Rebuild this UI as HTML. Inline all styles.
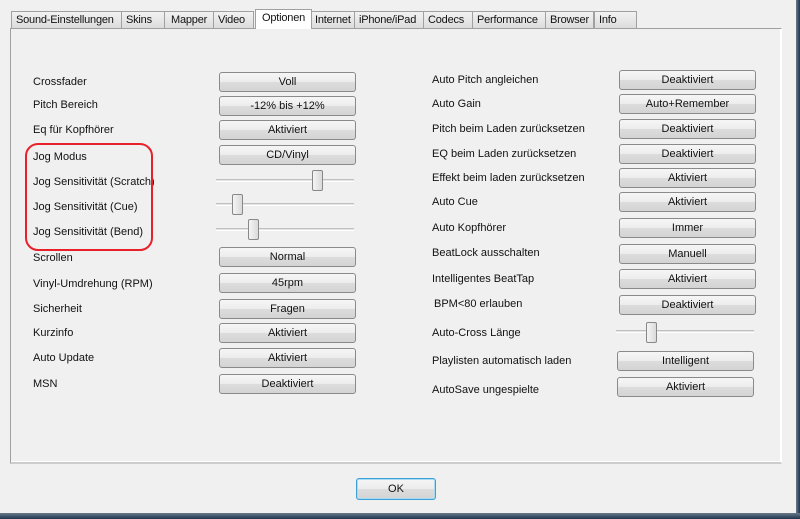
<!DOCTYPE html>
<html><head><meta charset="utf-8"><style>
body{margin:0;width:800px;height:519px;overflow:hidden;background:#f0f0f0;font-family:"Liberation Sans",sans-serif;font-size:11px;color:#111;position:relative}
.a{position:absolute}
.tab{position:absolute;top:11px;height:17px;border:1px solid #a0a0a0;border-bottom:none;background:linear-gradient(#f2f2f2,#dcdcdc);line-height:16px;box-sizing:border-box;padding-left:4px;white-space:nowrap;letter-spacing:-0.2px}
.sel{top:9px;height:20px;background:#fff;z-index:2;padding-left:6px}
.panel{position:absolute;left:10px;top:28px;width:772px;height:436px;box-sizing:border-box;border:1px solid #a0a0a0;border-right-color:#fff;border-bottom:2px solid #ccc;box-shadow:inset -1px -1px 0 #fff;background:#f0f0f0}
.lb{position:absolute;white-space:nowrap}
.bt{position:absolute;width:137px;height:20px;box-sizing:border-box;border:1px solid #8a8a8a;border-radius:3px;background:linear-gradient(#f6f6f6 0,#ececec 50%,#dcdcdc 51%,#d4d4d4 100%);text-align:center;line-height:18px}
.tr{position:absolute;height:1px;border-top:1px solid #c0c0c0;border-bottom:1px solid #fff;background:#e4e4e4}
.th{position:absolute;width:11px;height:21px;box-sizing:border-box;border:1px solid #888;border-radius:2px;background:linear-gradient(90deg,#f4f4f4,#dadada)}
</style></head><body>
<div class="panel"></div>
<div class="tab" style="left:11px;width:111px">Sound-Einstellungen</div>
<div class="tab" style="left:121px;width:44px">Skins</div>
<div class="tab" style="left:164px;width:50px;padding-left:6px">Mapper</div>
<div class="tab" style="left:213px;width:41px">Video</div>
<div class="tab sel" style="left:255px;width:57px">Optionen</div>
<div class="tab" style="left:311px;width:44px;padding-left:3px">Internet</div>
<div class="tab" style="left:354px;width:70px">iPhone/iPad</div>
<div class="tab" style="left:423px;width:50px">Codecs</div>
<div class="tab" style="left:472px;width:74px">Performance</div>
<div class="tab" style="left:545px;width:49px">Browser</div>
<div class="tab" style="left:594px;width:43px">Info</div>

<div class="lb" style="left:33px;top:76px">Crossfader</div><div class="bt" style="left:219px;top:72px">Voll</div>
<div class="lb" style="left:33px;top:99px">Pitch Bereich</div><div class="bt" style="left:219px;top:96px">-12% bis +12%</div>
<div class="lb" style="left:33px;top:124px">Eq für Kopfhörer</div><div class="bt" style="left:219px;top:120px">Aktiviert</div>
<div class="lb" style="left:33px;top:151px">Jog Modus</div><div class="bt" style="left:219px;top:145px">CD/Vinyl</div>
<div class="lb" style="left:33px;top:176px">Jog Sensitivität (Scratch)</div><div class="tr" style="left:216px;top:179px;width:138px"></div><div class="th" style="left:312px;top:170px"></div>
<div class="lb" style="left:33px;top:201px">Jog Sensitivität (Cue)</div><div class="tr" style="left:216px;top:203px;width:138px"></div><div class="th" style="left:232px;top:194px"></div>
<div class="lb" style="left:33px;top:226px">Jog Sensitivität (Bend)</div><div class="tr" style="left:216px;top:228px;width:138px"></div><div class="th" style="left:248px;top:219px"></div>
<div class="lb" style="left:33px;top:252px">Scrollen</div><div class="bt" style="left:219px;top:247px">Normal</div>
<div class="lb" style="left:33px;top:278px">Vinyl-Umdrehung (RPM)</div><div class="bt" style="left:219px;top:273px">45rpm</div>
<div class="lb" style="left:33px;top:303px">Sicherheit</div><div class="bt" style="left:219px;top:299px">Fragen</div>
<div class="lb" style="left:33px;top:327px">Kurzinfo</div><div class="bt" style="left:219px;top:323px">Aktiviert</div>
<div class="lb" style="left:33px;top:352px">Auto Update</div><div class="bt" style="left:219px;top:348px">Aktiviert</div>
<div class="lb" style="left:33px;top:378px">MSN</div><div class="bt" style="left:219px;top:374px">Deaktiviert</div>

<div class="a" style="left:25px;top:143px;width:128px;height:108px;box-sizing:border-box;border:2.5px solid #e8202a;border-radius:13px"></div>

<div class="lb" style="left:432px;top:74px">Auto Pitch angleichen</div><div class="bt" style="left:619px;top:70px">Deaktiviert</div>
<div class="lb" style="left:432px;top:98px">Auto Gain</div><div class="bt" style="left:619px;top:94px">Auto+Remember</div>
<div class="lb" style="left:432px;top:123px">Pitch beim Laden zurücksetzen</div><div class="bt" style="left:619px;top:119px">Deaktiviert</div>
<div class="lb" style="left:432px;top:148px">EQ beim Laden zurücksetzen</div><div class="bt" style="left:619px;top:144px">Deaktiviert</div>
<div class="lb" style="left:432px;top:172px">Effekt beim laden zurücksetzen</div><div class="bt" style="left:619px;top:168px">Aktiviert</div>
<div class="lb" style="left:432px;top:196px">Auto Cue</div><div class="bt" style="left:619px;top:192px">Aktiviert</div>
<div class="lb" style="left:432px;top:222px">Auto Kopfhörer</div><div class="bt" style="left:619px;top:218px">Immer</div>
<div class="lb" style="left:432px;top:247px">BeatLock ausschalten</div><div class="bt" style="left:619px;top:244px">Manuell</div>
<div class="lb" style="left:432px;top:273px">Intelligentes BeatTap</div><div class="bt" style="left:619px;top:269px">Aktiviert</div>
<div class="lb" style="left:434px;top:298px">BPM&lt;80 erlauben</div><div class="bt" style="left:619px;top:295px">Deaktiviert</div>
<div class="lb" style="left:432px;top:327px">Auto-Cross Länge</div><div class="tr" style="left:616px;top:330px;width:138px"></div><div class="th" style="left:646px;top:322px"></div>
<div class="lb" style="left:432px;top:355px">Playlisten automatisch laden</div><div class="bt" style="left:617px;top:351px">Intelligent</div>
<div class="lb" style="left:432px;top:384px">AutoSave ungespielte</div><div class="bt" style="left:617px;top:377px">Aktiviert</div>

<div class="bt" style="left:356px;top:478px;width:80px;height:22px;border:1px solid #3c9fd6;box-shadow:inset 0 0 0 1px #a8dcf5;line-height:20px">OK</div>

<div class="a" style="left:796px;top:0;width:4px;height:519px;background:linear-gradient(90deg,#6a7a88,#1d3550)"></div>
<div class="a" style="left:0;top:513px;width:800px;height:6px;background:linear-gradient(#6a7a88,#1d3550)"></div>
</body></html>
